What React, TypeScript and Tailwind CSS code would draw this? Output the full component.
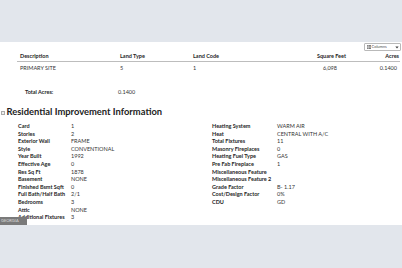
import React from "react";

const left: [string, string][] = [
  ["Card", "1"],
  ["Stories", "2"],
  ["Exterior Wall", "FRAME"],
  ["Style", "CONVENTIONAL"],
  ["Year Built", "1992"],
  ["Effective Age", "0"],
  ["Res Sq Ft", "1878"],
  ["Basement", "NONE"],
  ["Finished Bsmt Sqft", "0"],
  ["Full Bath/Half Bath", "2/1"],
  ["Bedrooms", "3"],
  ["Attic", "NONE"],
  ["Additional Fixtures", "3"],
];

const right: [string, string][] = [
  ["Heating System", "WARM AIR"],
  ["Heat", "CENTRAL WITH A/C"],
  ["Total Fixtures", "11"],
  ["Masonry Fireplaces", "0"],
  ["Heating Fuel Type", "GAS"],
  ["Pre Fab Fireplace", "1"],
  ["Miscellaneous Feature", ""],
  ["Miscellaneous Feature 2", ""],
  ["Grade Factor", "B- 1.17"],
  ["Cost/Design Factor", "0%"],
  ["CDU", "GD"],
];

function DetailList({ rows, labelW }: { rows: [string, string][]; labelW: string }) {
  return (
    <div className="flex flex-col">
      {rows.map(([k, v]) => (
        <div key={k} className="flex h-[7.6px] items-center leading-none">
          <span className={`${labelW} font-bold text-[#262626]`}>{k}</span>
          <span className="text-[#333]">{v}</span>
        </div>
      ))}
    </div>
  );
}

export default function App() {
  return (
    <div
      className="relative flex h-[268px] w-[402px] flex-col overflow-hidden bg-white text-[5.5px] text-[#333]"
      style={{ fontFamily: "Lato, 'Open Sans', sans-serif" }}
    >
      <div className="h-[42px] shrink-0 bg-[#e2e6ec]" />

      <div className="relative flex h-[183px] shrink-0 flex-col">
        {/* column picker */}
        <div className="flex justify-end pr-[1px] pt-[1px]">
          <div className="flex h-[8px] w-[37px] items-center gap-[1px] rounded-[1px] border border-[#b9b9b9] bg-white px-[1.5px] text-[4px] text-[#555]">
            <svg width="4" height="4" viewBox="0 0 4 4" className="shrink-0">
              <rect x="0" y="0" width="4" height="4" fill="#777" />
              <path d="M0 1.3h4M0 2.6h4M1.3 0v4" stroke="#fff" strokeWidth="0.4" />
            </svg>
            <span className="flex-1">Columns</span>
            <svg width="4" height="3" viewBox="0 0 4 3">
              <path d="M0.3 0.6h3.4L2 2.6z" fill="#444" />
            </svg>
          </div>
        </div>

        {/* land table */}
        <div className="ml-[17px] mr-[2px] mt-[1px]">
          <div className="grid h-[10px] grid-cols-[100px_73px_1fr_60px_54px] items-center border-b border-[#bdbdbd] font-bold text-[#262626]">
            <span className="pl-[3px]">Description</span>
            <span className="pl-[3px]">Land Type</span>
            <span className="pl-[3px]">Land Code</span>
            <span className="text-right">Square Feet</span>
            <span className="pr-[1px] text-right">Acres</span>
          </div>
          <div className="grid h-[12px] grid-cols-[100px_73px_1fr_60px_54px] items-center text-[#333]">
            <span className="pl-[3px]">PRIMARY SITE</span>
            <span className="pl-[3px]">5</span>
            <span className="pl-[3px]">1</span>
            <span className="pr-[9px] text-right">6,098</span>
            <span className="pr-[3px] text-right">0.1400</span>
          </div>
          <div className="mt-[14px] flex h-[8px] items-center">
            <span className="w-[101px] pl-[8px] font-bold text-[#262626]">Total Acres:</span>
            <span className="text-[#333]">0.1400</span>
          </div>
        </div>

        {/* section heading */}
        <div className="mt-[11px] flex h-[11px] items-center">
          <span className="ml-[1px] mr-[1.5px] h-[4px] w-[4px] border-[0.6px] border-[#aaa] bg-[#eee]" />
          <span className="text-[9.4px] font-bold text-[#222]">Residential Improvement Information</span>
        </div>

        <div className="mt-[5px] flex">
          <div className="ml-[18px] w-[194px]">
            <DetailList rows={left} labelW="w-[53px]" />
          </div>
          <DetailList rows={right} labelW="w-[65px]" />
        </div>

        {/* state tag */}
        <div className="absolute bottom-0 left-0 flex h-[8px] w-[27px] items-center bg-[#7a7a7a] pl-[1px] text-[4px] text-[#ddd]">
          GEORGIA
        </div>
      </div>

      <div className="flex-1 bg-[#e2e6ec]" />
    </div>
  );
}
